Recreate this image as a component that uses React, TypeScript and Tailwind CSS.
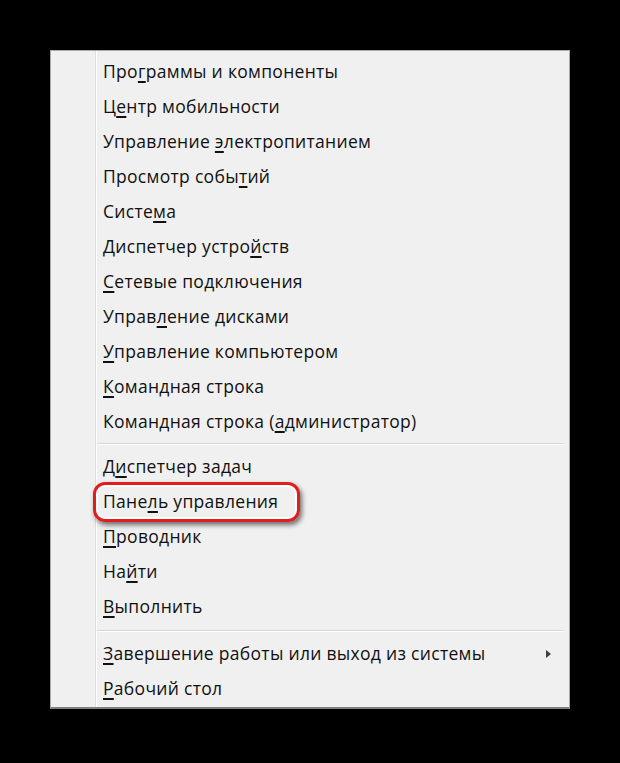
const groups: [string, number][][] = [
  [
    ["Программы и компоненты", 3],
    ["Центр мобильности", 1],
    ["Управление электропитанием", 11],
    ["Просмотр событий", 13],
    ["Система", 5],
    ["Диспетчер устройств", 15],
    ["Сетевые подключения", 0],
    ["Управление дисками", 5],
    ["Управление компьютером", 0],
    ["Командная строка", 0],
    ["Командная строка (администратор)", 18],
  ],
  [
    ["Диспетчер задач", 1],
    ["Панель управления", 4],
    ["Проводник", 0],
    ["Найти", 2],
    ["Выполнить", 0],
  ],
  [
    ["Завершение работы или выход из системы", 0],
    ["Рабочий стол", 0],
  ],
];

function Label({ text, idx }: { text: string; idx: number }) {
  return (
    <span>
      {text.slice(0, idx)}
      <span className="underline decoration-[1.5px] underline-offset-[3px]">{text[idx]}</span>
      {text.slice(idx + 1)}
    </span>
  );
}

function Separator({ top, bottom }: { top: string; bottom: string }) {
  return (
    <div className={`${top} ${bottom} pr-[5px]`}>
      <div className="h-px bg-[#d7d7d7]" />
      <div className="h-px bg-white" />
    </div>
  );
}

export default function App() {
  return (
    <div
      className="w-[620px] h-[763px] bg-black pt-[50px] pl-[50px]"
      style={{ fontFamily: '"Open Sans", "Noto Sans", sans-serif' }}
    >
      <div className="w-[520px] h-[659px] bg-[#f0f0f0] border border-[#a9a9a9] border-b-2 border-b-[#808080] flex">
        <div className="w-[44px] shrink-0" />
        <div className="w-px bg-[#dedede]" />
        <div className="w-px bg-white" />
        <div className="flex-1 pt-[3px] text-[17.5px] font-medium tracking-[0.3px] text-[#111111]">
          {groups.map((g, gi) => (
            <div key={gi}>
              {gi === 1 && <Separator top="pt-[4px]" bottom="pb-[4px]" />}
              {gi === 2 && <Separator top="pt-[6px]" bottom="pb-[4px]" />}
              {g.map(([t, i]) => (
                <div key={t} className="relative h-[35px] flex items-center pl-[6px] pr-[18px]">
                  <Label text={t} idx={i} />
                  {t.startsWith("Завершение") && (
                    <div className="ml-auto w-0 h-0 border-y-[4px] border-y-transparent border-l-[5px] border-l-[#404040]" />
                  )}
                  {t === "Панель управления" && (
                    <div className="absolute left-[-4px] top-[-2px] w-[207px] h-[40px] rounded-[12px] border-[3px] border-[#e11d1d] shadow-[inset_0_0_0_2px_#ffffff,2px_3px_5px_rgba(0,0,0,0.55)]" />
                  )}
                </div>
              ))}
            </div>
          ))}
        </div>
      </div>
    </div>
  );
}
